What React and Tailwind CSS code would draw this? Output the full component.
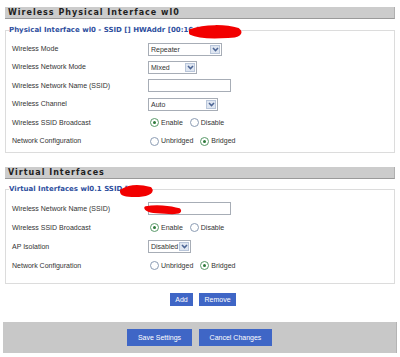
import React from "react";

const LBL = "font-['Liberation_Sans',sans-serif] text-[7px] text-[#333]";

function Chevron() {
  return (
    <svg width="7" height="5" viewBox="0 0 7 5">
      <path d="M1 1 L3.5 3.6 L6 1" fill="none" stroke="#4d6594" strokeWidth="1.5" />
    </svg>
  );
}

function Select({ value, w }) {
  return (
    <div className={`flex h-[13px] items-stretch border border-[#a7adb6] bg-white ${w}`}>
      <span className={`flex-1 whitespace-nowrap pl-[2px] leading-[11px] ${LBL} text-[#222]`}>{value}</span>
      <span className="m-[1px] flex w-[10px] shrink-0 items-center justify-center border border-[#b9c6da] bg-[#dfe6f1]">
        <Chevron />
      </span>
    </div>
  );
}

function Radio({ checked, label }) {
  return (
    <span className="flex items-center gap-[2px]">
      <span
        className={`flex h-[9px] w-[9px] items-center justify-center rounded-full border bg-white ${
          checked ? "border-[#5a9a6a]" : "border-[#8b9cb3]"
        }`}
      >
        {checked && <span className="h-[3px] w-[3px] rounded-full bg-[#2d7a3a]" />}
      </span>
      <span className={LBL}>{label}</span>
    </span>
  );
}

function Row({ label, h, children }) {
  return (
    <div className={`flex items-center ${h}`}>
      <div className={`w-[139px] pl-[3px] ${LBL}`}>{label}</div>
      <div className="flex items-center">{children}</div>
    </div>
  );
}

function TextInput() {
  return <div className="h-[13px] w-[83px] border border-[#a7adb6] bg-white" />;
}

function Header({ children }) {
  return (
    <div className="flex h-[12px] items-center border-b border-r border-b-[#9a9a9a] border-r-[#b0b0b0] bg-[#cccccc] pl-[3px] font-['DejaVu_Sans',sans-serif] text-[8px] font-bold tracking-[1px] text-[#1e1e1e]">
      {children}
    </div>
  );
}

function Button({ children, w }) {
  return (
    <div
      className={`flex items-center justify-center bg-[#3f66c6] font-['Liberation_Sans',sans-serif] text-[7px] text-white ${w}`}
    >
      {children}
    </div>
  );
}

export default function App() {
  return (
    <div className="relative h-[357px] w-[400px] overflow-hidden bg-white">
      <div className="px-[5px] pt-[7px]">
        <Header>Wireless Physical Interface wl0</Header>

        <fieldset className="mt-[7px] border border-[#dcdcdc] px-[3px] pb-[2px]">
          <legend className="font-['DejaVu_Sans',sans-serif] text-[7px] font-bold leading-[9px] text-[#2f4f9e]">
            Physical Interface wl0 - SSID [] HWAddr [00:16:3
          </legend>
          <div className="pt-[5px]">
            <Row label="Wireless Mode" h="h-[18.4px]">
              <Select value="Repeater" w="w-[74px]" />
            </Row>
            <Row label="Wireless Network Mode" h="h-[18.4px]">
              <Select value="Mixed" w="w-[49px]" />
            </Row>
            <Row label="Wireless Network Name (SSID)" h="h-[18.4px]">
              <TextInput />
            </Row>
            <Row label="Wireless Channel" h="h-[18.4px]">
              <Select value="Auto" w="w-[70px]" />
            </Row>
            <Row label="Wireless SSID Broadcast" h="h-[18.4px]">
              <div className="flex items-center gap-[7px] pl-[2px]">
                <Radio checked label="Enable" />
                <Radio label="Disable" />
              </div>
            </Row>
            <Row label="Network Configuration" h="h-[18.4px]">
              <div className="flex items-center gap-[7px] pl-[2px]">
                <Radio label="Unbridged" />
                <Radio checked label="Bridged" />
              </div>
            </Row>
          </div>
        </fieldset>

        <div className="mt-[14px]">
          <Header>Virtual Interfaces</Header>
        </div>

        <fieldset className="mt-[6px] border border-[#dcdcdc] px-[3px] pb-[8px]">
          <legend className="font-['DejaVu_Sans',sans-serif] text-[7px] font-bold leading-[9px] text-[#2f4f9e]">
            Virtual Interfaces wl0.1 SSID [
          </legend>
          <div className="pt-[5px]">
            <Row label="Wireless Network Name (SSID)" h="h-[19px]">
              <TextInput />
            </Row>
            <Row label="Wireless SSID Broadcast" h="h-[19px]">
              <div className="flex items-center gap-[7px] pl-[2px]">
                <Radio checked label="Enable" />
                <Radio label="Disable" />
              </div>
            </Row>
            <Row label="AP Isolation" h="h-[19px]">
              <Select value="Disabled" w="w-[43px]" />
            </Row>
            <Row label="Network Configuration" h="h-[19px]">
              <div className="flex items-center gap-[7px] pl-[2px]">
                <Radio label="Unbridged" />
                <Radio checked label="Bridged" />
              </div>
            </Row>
          </div>
        </fieldset>

        <div className="mt-[9px] flex justify-center gap-[6px] pl-[6px]">
          <Button w="h-[13px] w-[23px]">Add</Button>
          <Button w="h-[13px] w-[37px]">Remove</Button>
        </div>
      </div>

      <div className="mx-[3px] mt-[16px] flex h-[31px] items-center justify-center gap-[7px] border-r border-[#b4b4b4] bg-[#c8c8c8]">
        <Button w="h-[17px] w-[65px]">Save Settings</Button>
        <Button w="h-[17px] w-[73px]">Cancel Changes</Button>
      </div>

      {/* redaction scribbles */}
      <svg className="pointer-events-none absolute left-0 top-0" width="400" height="357">
        <path d="M191 31 C205 26, 225 26, 238 30 C242 33, 238 36, 228 36 C212 37, 197 36, 191 33 Z" fill="#f20000" stroke="#f20000" strokeWidth="4" strokeLinejoin="round" />
        <path d="M122 191 C130 186, 140 186, 150 189 C153 192, 146 195, 135 195 C126 195, 121 194, 122 191 Z" fill="#f20000" stroke="#f20000" strokeWidth="4" strokeLinejoin="round" />
        <path d="M146 208 C155 206, 170 207, 179 210 C181 212, 175 213, 165 212 C155 212, 147 211, 146 208 Z" fill="#f20000" stroke="#f20000" strokeWidth="3.5" strokeLinejoin="round" />
      </svg>
    </div>
  );
}
